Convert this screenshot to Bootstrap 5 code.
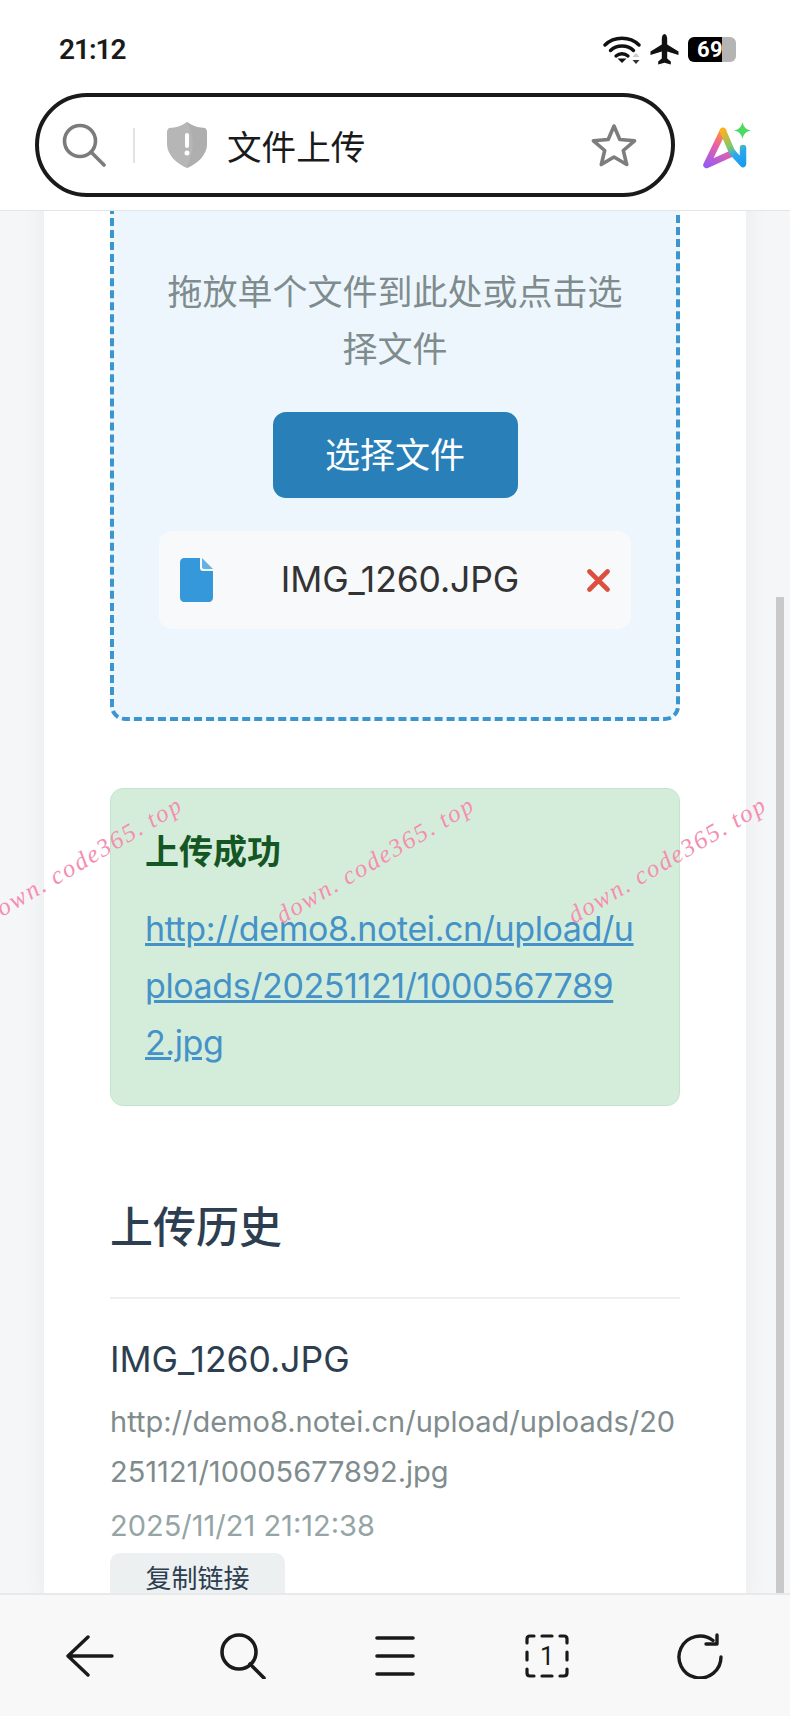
<!DOCTYPE html>
<html lang="zh-CN">
<head>
    <meta charset="UTF-8">
    <meta name="viewport" content="width=device-width, initial-scale=1.0">
    <title>文件上传</title>
    <link href="https://cdn.jsdelivr.net/npm/bootstrap@5.3.3/dist/css/bootstrap.min.css" rel="stylesheet">
    <style>
        html, body { height: 100%; overflow: hidden; }
        body {
            font-family: Inter, "Noto Sans CJK SC", sans-serif;
            color: #2c3e50;
            background: #f5f6f8;
        }
        .phone { width: 790px; height: 1716px; }

        /* browser chrome */
        .topbar { height: 211px; flex: none; border-bottom: 1px solid #e3e5e8; background: #fff; }
        .status-row { height: 93px; padding: 0 54px 0 59px; }
        .clock { font-family: Roboto, sans-serif; font-size: 28px; font-weight: 600; color: #1a1a1a; letter-spacing: -1px; line-height: 1; margin-top: 6px; }
        .status-icons { margin-top: 6px; gap: 9px; }
        .battery { width: 48px; height: 25px; border-radius: 6px; background: linear-gradient(90deg, #000 0 34px, #b4b4b4 34px); }
        .battery-num { font-family: Roboto, sans-serif; font-size: 22px; font-weight: 700; color: #fff; line-height: 25px; padding-left: 9px; letter-spacing: .5px; }
        .addr-row { padding-left: 35px; }
        .addr-pill { width: 640px; height: 104px; border: 4px solid #1a1a1a; border-radius: 52px; padding: 0 34px 0 23px; }
        .addr-divider { width: 2px; height: 35px; background: #e3e3e3; margin: 0 32px 0 27px; }
        .addr-title { font-size: 34.6px; color: #1a1a1a; margin-left: 20px; line-height: 1; padding-top: 4px; }
        .ai-logo { margin-left: 28px; }

        /* page */
        .scroll-view { flex: 1; min-height: 0; overflow: hidden; background: #f5f6f8; }
        .page-sheet { margin: 0 44px; padding: 0 66px; background: #fff; box-shadow: 0 0 24px rgba(0, 0, 0, .05); min-height: 100%; }
        .drop-box {
            margin-top: -40px;
            padding: 89px 45px 88px;
            border: 4px dashed #3b96d0;
            border-radius: 15px;
            background: #eef6fd;
            text-align: center;
        }
        .drop-text { font-size: 35px; line-height: 57px; color: #7f8c8d; margin: 0 -5px 34px; }
        .pick-btn { width: 245px; height: 86px; font-size: 35px; border-radius: 13px; background: #2980b9; color: #fff; border: 0; padding: 0; }
        .picked-file { margin-top: 33px; height: 98px; padding: 0 21px; background: #f7f9fb; border-radius: 13px; }
        .picked-name { font-size: 35.5px; letter-spacing: -.1px; color: #333; }

        .ok-box { margin-top: 67px; height: 318px; padding: 42px 30px 0 34px; background: #d4edda; border: 1px solid #c3e6cb; border-radius: 13px; }
        .ok-title { font-size: 34px; font-weight: 700; line-height: 41px; color: #155724; margin: 0 0 28px; }
        .ok-link { display: block; font-size: 34px; letter-spacing: -.4px; line-height: 57px; color: #4592c8; }

        .history-title { margin: 91px 0 0; font-size: 43px; font-weight: 500; line-height: 60px; color: #2c3e50; padding-bottom: 40px; border-bottom: 2px solid #ecf0f1; }
        .history-name { margin-top: 35px; font-size: 35.5px; font-weight: 400; line-height: 52px; color: #2c3e50; }
        .history-url { margin-top: 11px; font-size: 29px; line-height: 50px; color: #7f8c8d; word-break: break-all; }
        .history-date { margin-top: 4px; font-size: 29px; line-height: 50px; color: #95a5a6; }
        .copy-btn { display: block; width: 175px; height: 50px; margin-top: 2px; padding: 0; font-size: 26px; color: #2c3e50; background: #ecf0f1; border: 0; border-radius: 10px; }

        .scroll-thumb { position: absolute; right: 6px; top: 386px; bottom: 0; width: 8px; background: #c9c9c9; }

        /* pink site watermark, lies over the page */
        .wm-layer { position: absolute; left: -63px; top: 636px; pointer-events: none; }
        .wm-text { width: 292px; text-align: center; white-space: nowrap; font-family: "Liberation Serif", serif; font-style: italic; font-size: 25px; letter-spacing: 1.8px; color: #f48fb1; transform: rotate(-30.5deg); line-height: 1; }
        .wm-dot { margin-right: 7px; }

        .bottombar { height: 123px; flex: none; padding: 0 14px; background: #f8f8f8; border-top: 2px solid #e8e9ea; }
        .bar-item { width: 153px; }
    </style>
</head>
<body>
    <div class="phone d-flex flex-column">
        <header class="topbar">
            <div class="status-row d-flex align-items-center justify-content-between">
                <span class="clock">21:12</span>
                <div class="status-icons d-flex align-items-center">
                    <svg width="38" height="28" viewBox="0 0 38 28" fill="none" stroke="#111" stroke-width="3.4" stroke-linecap="round">
                        <path d="M2 9C11 0 27 0 36 9"/>
                        <path d="M7.5 14.5C13.5 8.5 24.5 8.5 30.5 14.5"/>
                        <path d="M13 20C16.500 17 21.500 17 25 20"/>
                        <path d="M19 27l-4.500-4.500h9z" fill="#111" stroke="none"/>
                        <path d="M33 17l3.500 4h-7z" fill="#ccc" stroke="none"/>
                        <path d="M33 28l3.500-4h-7z" fill="#333" stroke="none"/>
                    </svg>
                    <svg width="29" height="31" viewBox="0 0 29 31" fill="#111">
                        <path d="M14.500 0C16.200 0 17.200 2.500 17.200 5V10.500L28.500 17.500V21L17.200 17.500V24.500L20.800 27.500V30.500L14.500 28.800L8.200 30.500V27.500L11.800 24.500V17.500L.5 21V17.500L11.800 10.500V5C11.800 2.500 12.800 0 14.500 0Z"/>
                    </svg>
                    <div class="battery"><div class="battery-num">69</div></div>
                </div>
            </div>
            <div class="addr-row d-flex align-items-center">
                <div class="addr-pill d-flex align-items-center">
                    <svg width="44" height="44" viewBox="0 0 44 44" fill="none" stroke="#7b7b7b" stroke-width="3.6" stroke-linecap="round">
                        <circle cx="18" cy="18" r="15.500"/>
                        <path d="M29 29L42 42"/>
                    </svg>
                    <span class="addr-divider"></span>
                    <svg width="40" height="46" viewBox="0 0 40 46">
                        <path d="M20 0C24 3 31 6 38 6C39 7 40 8 40 10V22C40 33 30 42 20 46C10 42 0 33 0 22V10C0 8 1 7 2 6C9 6 16 3 20 0Z" fill="#b6b6b6"/>
                        <path d="M20 0C24 3 31 6 38 6C39 7 40 8 40 10V22C40 33 30 42 20 46C22 36 32 26 20 0Z" fill="#a9a9a9" opacity=".6"/>
                        <rect x="18" y="11" width="4" height="15" rx="2" fill="#fff"/>
                        <circle cx="20" cy="31" r="2.500" fill="#fff"/>
                    </svg>
                    <span class="addr-title">文件上传</span>
                    <svg class="ms-auto" width="46" height="44" viewBox="0 0 46 44" fill="none" stroke="#7d7d7d" stroke-width="3.600" stroke-linejoin="round">
                        <path d="M23 3L28.800 16.500L43.500 17.800L32.300 27.500L35.700 41.500L23 34L10.300 41.500L13.700 27.500L2.500 17.800L17.200 16.500Z"/>
                    </svg>
                </div>
                <svg class="ai-logo" width="49" height="47" viewBox="0 0 49 47" fill="none" stroke-width="6.500" stroke-linecap="round" stroke-linejoin="round">
                    <defs>
                        <linearGradient id="aiLeft" gradientUnits="userSpaceOnUse" x1="20" y1="8" x2="6" y2="44">
                            <stop offset="0" stop-color="#ff9a1f"/>
                            <stop offset=".45" stop-color="#e85fa8"/>
                            <stop offset="1" stop-color="#9a5cf0"/>
                        </linearGradient>
                        <linearGradient id="aiRight" gradientUnits="userSpaceOnUse" x1="20" y1="8" x2="40" y2="42">
                            <stop offset="0" stop-color="#ffb01f"/>
                            <stop offset=".45" stop-color="#7fc96a"/>
                            <stop offset=".7" stop-color="#28a8f0"/>
                            <stop offset="1" stop-color="#1e9bf0"/>
                        </linearGradient>
                    </defs>
                    <path d="M20 9L3.500 43L30 31" stroke="url(#aiLeft)"/>
                    <path d="M20 9L29 30L40 42V26" stroke="url(#aiRight)"/>
                    <path d="M39.500 0C40.500 5 43 7.500 48 8.500C43 9.500 40.500 12 39.500 17C38.500 12 36 9.500 31 8.500C36 7.500 38.500 5 39.500 0Z" fill="#4cd964"/>
                </svg>
            </div>
        </header>

        <main class="scroll-view position-relative">
            <div class="page-sheet">
                <div class="drop-box">
                    <p class="drop-text">拖放单个文件到此处或点击选择文件</p>
                    <button type="button" class="btn pick-btn">选择文件</button>
                    <div class="picked-file d-flex align-items-center justify-content-between">
                        <svg width="33" height="44" viewBox="0 0 33 44">
                            <path d="M4 0H20V10C20 12 21 13 23 13H33V40C33 42 31 44 29 44H4C2 44 0 42 0 40V4C0 2 2 0 4 0Z" fill="#3498db"/>
                            <path d="M22 0L33 11H24C23 11 22 10 22 9Z" fill="#3498db" opacity=".75"/>
                        </svg>
                        <span class="picked-name">IMG_1260.JPG</span>
                        <svg width="23" height="23" viewBox="0 0 23 23" stroke="#dc4f3e" stroke-width="4.600" stroke-linecap="round">
                            <path d="M2.500 2.500L20.500 20.500M20.500 2.500L2.500 20.500"/>
                        </svg>
                    </div>
                </div>

                <div class="ok-box">
                    <h3 class="ok-title">上传成功</h3>
                    <a class="ok-link" href="#">http://demo8.notei.cn/upload/u<br>ploads/20251121/1000567789<br>2.jpg</a>
                </div>

                <h2 class="history-title">上传历史</h2>
                <div class="history-name">IMG_1260.JPG</div>
                <div class="history-url">http://demo8.notei.cn/upload/uploads/20251121/10005677892.jpg</div>
                <div class="history-date">2025/11/21 21:12:38</div>
                <button type="button" class="btn copy-btn">复制链接</button>
            </div>
            <div class="scroll-thumb"></div>
            <div class="wm-layer d-flex">
                <div class="wm-text">down<span class="wm-dot">.</span>code365<span class="wm-dot">.</span>top</div>
                <div class="wm-text">down<span class="wm-dot">.</span>code365<span class="wm-dot">.</span>top</div>
                <div class="wm-text">down<span class="wm-dot">.</span>code365<span class="wm-dot">.</span>top</div>
            </div>
        </main>

        <footer class="bottombar d-flex align-items-center">
            <div class="bar-item d-flex justify-content-center">
                <svg width="48" height="42" viewBox="0 0 48 42" fill="none" stroke="#1a1a1a" stroke-width="3.400" stroke-linecap="round" stroke-linejoin="round">
                    <path d="M22 2L2 21L22 40M2 21H46"/>
                </svg>
            </div>
            <div class="bar-item d-flex justify-content-center">
                <svg width="46" height="46" viewBox="0 0 46 46" fill="none" stroke="#1a1a1a" stroke-width="3.600" stroke-linecap="round">
                    <circle cx="19" cy="19" r="17"/>
                    <path d="M30 31L44 45"/>
                </svg>
            </div>
            <div class="bar-item d-flex justify-content-center">
                <svg width="40" height="40" viewBox="0 0 40 40" fill="none" stroke="#1a1a1a" stroke-width="3.600" stroke-linecap="round">
                    <path d="M2 2H38M2 20H38M2 38H38"/>
                </svg>
            </div>
            <div class="bar-item d-flex justify-content-center">
                <svg width="44" height="44" viewBox="0 0 44 44" fill="none" stroke="#1a1a1a" stroke-width="3.200" stroke-linecap="round">
                    <path d="M2 9V5C2 3 3 2 5 2H9M17 2H27M35 2H39C41 2 42 3 42 5V9M2 18V26M42 18V26M2 35V39C2 41 3 42 5 42H9M17 42H27M35 42H39C41 42 42 41 42 39V35"/>
                    <text x="22" y="31" font-family="Roboto, sans-serif" font-size="25" text-anchor="middle" fill="#1a1a1a" stroke="none">1</text>
                </svg>
            </div>
            <div class="bar-item d-flex justify-content-center">
                <svg width="46" height="46" viewBox="0 0 46 46" fill="none" stroke="#1a1a1a" stroke-width="3.400" stroke-linecap="round" stroke-linejoin="round">
                    <path d="M44 24A21 21 0 1 1 36 7.500"/>
                    <path d="M40 2V11H29"/>
                </svg>
            </div>
        </footer>
    </div>

    <script src="https://cdn.jsdelivr.net/npm/bootstrap@5.3.3/dist/js/bootstrap.bundle.min.js"></script>
</body>
</html>
